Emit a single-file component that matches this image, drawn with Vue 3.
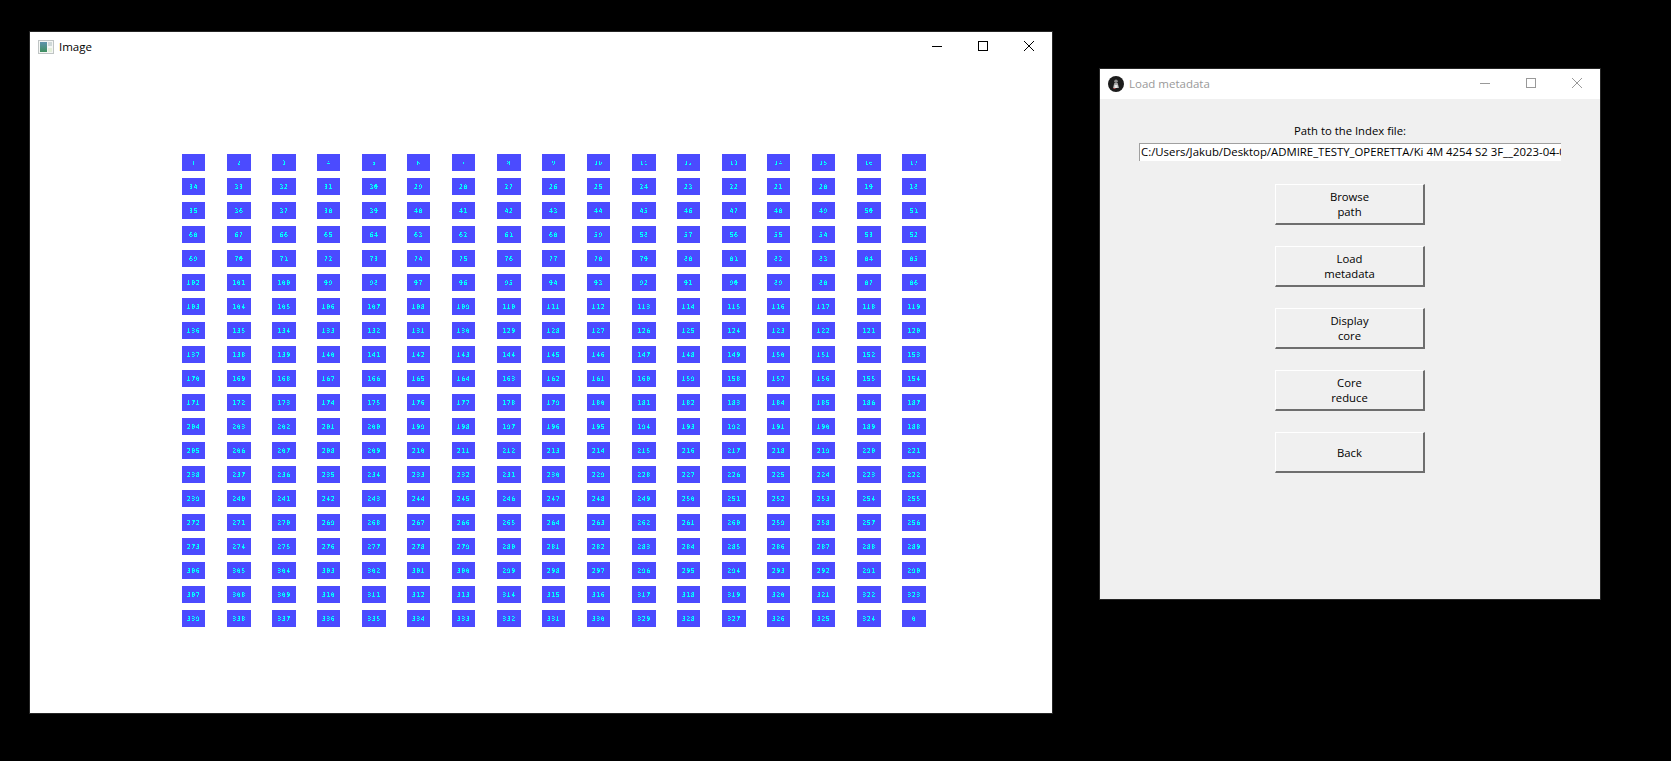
<script setup>
const wideColumns = [0, 1, 1, 0, 1, 0, 0, 1, 0, 0, 1, 0, 1, 0, 0, 1, 1]
const ROWS = 20
const COLS = 17

function labelAt(r, c) {
  if (r === ROWS - 1) return c === COLS - 1 ? 0 : 339 - c
  return r % 2 === 0 ? r * COLS + c + 1 : (r + 1) * COLS - c
}

const tiles = []
for (let r = 0; r < ROWS; r++) {
  for (let c = 0; c < COLS; c++) {
    tiles.push({
      id: `${r}-${c}`,
      label: labelAt(r, c),
      wide: wideColumns[c] === 1,
      thin: r < 1
    })
  }
}
const buttons = [
  ['Browse', 'path'],
  ['Load', 'metadata'],
  ['Display', 'core'],
  ['Core', 'reduce'],
  ['Back']
]
const path = 'C:/Users/Jakub/Desktop/ADMIRE_TESTY_OPERETTA/Ki 4M 4254 S2 3F__2023-04-0'
</script>

<template>
  <div class="desktop">
    <svg class="defs" aria-hidden="true">
      <filter id="crisp" x="-10%" y="-20%" width="120%" height="140%" color-interpolation-filters="sRGB">
        <feComponentTransfer>
          <feFuncA type="discrete" tableValues="0 0 1 1" />
        </feComponentTransfer>
      </filter>
    </svg>

    <section class="window image-window">
      <header class="titlebar">
        <div class="title-left">
          <svg class="app-icon" width="16" height="14" viewBox="0 0 16 14">
            <rect x="0.5" y="0.5" width="15" height="13" fill="#f4f6f4" stroke="#bfc4c4" />
            <defs>
              <linearGradient id="pic" x1="0" y1="0" x2="0" y2="1">
                <stop offset="0" stop-color="#5f93ad" />
                <stop offset="1" stop-color="#3f8f5f" />
              </linearGradient>
            </defs>
            <rect x="2" y="2" width="7" height="10" fill="url(#pic)" />
            <rect x="10" y="2" width="4" height="4" fill="#cfd8d8" />
            <rect x="10" y="8" width="4" height="4" fill="#e4efd9" />
          </svg>
          <span class="title-text">Image</span>
        </div>
        <div class="controls">
          <svg width="46" height="12" viewBox="0 0 12 12" class="ctl"><path d="M1 6.5h10" stroke="#000" fill="none" /></svg>
          <svg width="46" height="12" viewBox="0 0 12 12" class="ctl"><rect x="1.5" y="1.5" width="9" height="9" stroke="#000" fill="none" /></svg>
          <svg width="46" height="12" viewBox="0 0 12 12" class="ctl"><path d="M1 1l10 10M11 1L1 11" stroke="#000" fill="none" /></svg>
        </div>
      </header>
      <div class="tile-grid">
        <div v-for="t in tiles" :key="t.id" class="tile" :class="{ wide: t.wide }">
          <span class="num" :class="{ thin: t.thin }">{{ t.label }}</span>
        </div>
      </div>
    </section>

    <section class="window meta-window">
      <header class="titlebar">
        <div class="title-left">
          <svg class="app-icon" width="16" height="16" viewBox="0 0 16 16">
            <circle cx="8" cy="8" r="8" fill="#1c1c1c" />
            <circle cx="8" cy="5.2" r="1.8" fill="#8f8f8f" />
            <path d="M5 12l1.3-5h3.4L11 12z" fill="#a9a9a9" />
            <path d="M6.5 9h3v3h-3z" fill="#e7e7e7" />
            <path d="M5.5 12h2v1h-2z" fill="#b5484a" />
          </svg>
          <span class="title-text muted">Load metadata</span>
        </div>
        <div class="controls">
          <svg width="46" height="12" viewBox="0 0 12 12" class="ctl"><path d="M1 6.5h10" stroke="#999" fill="none" /></svg>
          <svg width="46" height="12" viewBox="0 0 12 12" class="ctl"><rect x="1.5" y="1.5" width="9" height="9" stroke="#999" fill="none" /></svg>
          <svg width="46" height="12" viewBox="0 0 12 12" class="ctl"><path d="M1 1l10 10M11 1L1 11" stroke="#999" fill="none" /></svg>
        </div>
      </header>
      <div class="meta-body">
        <div class="field-label">Path to the Index file:</div>
        <div class="entry"><span>{{ path }}</span></div>
        <button v-for="b in buttons" :key="b[0]" class="tk-btn" type="button">
          <span v-for="line in b" :key="line" class="btn-line">{{ line }}</span>
        </button>
      </div>
    </section>
  </div>
</template>

<style>
html, body { background: #000; overflow: hidden; }
</style>

<style scoped>
.desktop {
  display: flex;
  align-items: flex-start;
  gap: 46px;
  padding: 31px 0 0 29px;
  height: 761px;
  box-sizing: border-box;
  background: #000;
  font-family: "Open Sans", "Noto Sans", sans-serif;
  font-size: 11.3px;
  color: #000;
}
.defs { position: absolute; width: 0; height: 0; }
.window {
  flex: none;
  box-sizing: border-box;
  background: #fff;
  border: 1px solid #262626;
}
.image-window { width: 1024px; height: 683px; }
.meta-window {
  width: 502px;
  height: 532px;
  margin-top: 37px;
  display: flex;
  flex-direction: column;
}
.titlebar {
  display: flex;
  align-items: center;
  justify-content: space-between;
  height: 30px;
  background: #fff;
}
.title-left {
  display: flex;
  align-items: center;
  padding-left: 8px;
  gap: 5px;
}
.title-text { font-size: 11.5px; line-height: 16px; }
.muted { color: #999; }
.app-icon { display: block; }
.controls { display: flex; align-items: center; padding-bottom: 2px; }
.ctl { display: block; }
.tile-grid {
  display: grid;
  grid-template-columns: repeat(17, 45px);
  grid-auto-rows: 24px;
  padding: 92px 0 0 152px;
}
.tile {
  width: 23px;
  height: 17px;
  background: #4b4bff;
  display: flex;
  align-items: center;
  justify-content: center;
}
.tile.wide { width: 24px; }
.num {
  font-family: "DejaVu Sans Mono", "Liberation Mono", monospace;
  font-size: 6.5px;
  line-height: 8px;
  color: #00ffff;
  font-weight: 700;
  letter-spacing: 0.6px;
  filter: url(#crisp);
}
.num.thin { font-weight: 400; font-size: 6px; }
.meta-body {
  flex: 1;
  background: #f0f0f0;
  display: flex;
  flex-direction: column;
  align-items: center;
  padding-top: 24px;
}
.field-label { line-height: 16px; }
.entry {
  box-sizing: border-box;
  width: 422px;
  height: 18px;
  margin-top: 4px;
  margin-bottom: 2px;
  background: #fff;
  border-top: 1px solid #a0a0a0;
  border-left: 1px solid #a0a0a0;
  overflow: hidden;
  white-space: nowrap;
  line-height: 16px;
  padding-left: 1px;
  font-size: 11.36px;
}
.tk-btn {
  box-sizing: border-box;
  width: 150px;
  height: 41px;
  margin: 21px 0 0;
  padding: 0;
  background: #f0f0f0;
  border-style: solid;
  border-width: 1px 2px 2px 1px;
  border-color: #fff #6e6e6e #6e6e6e #fff;
  border-radius: 0;
  font: inherit;
  color: #000;
  display: flex;
  flex-direction: column;
  align-items: center;
  justify-content: center;
}
.btn-line { display: block; line-height: 15px; }
</style>
